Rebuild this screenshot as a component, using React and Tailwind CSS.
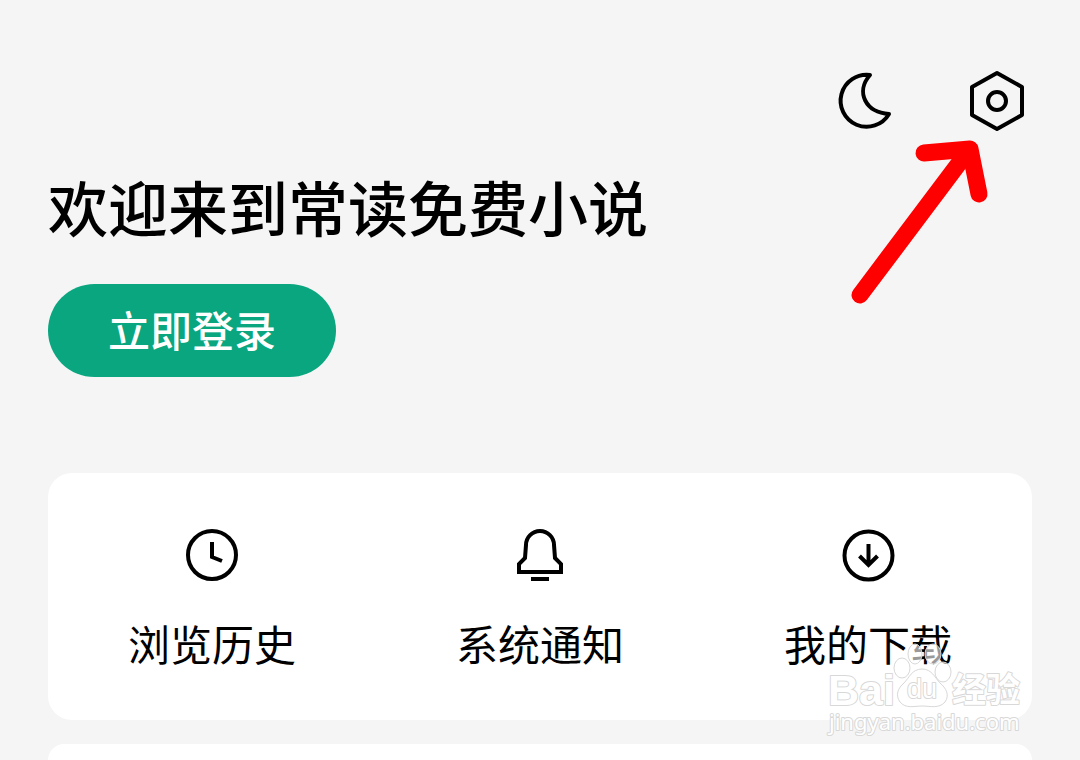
import React from "react";

const cjk = "font-['Noto_Sans_CJK_SC',sans-serif]";

const MoonIcon = () => (
  <svg viewBox="0 0 72 72" className="w-[72px] h-[72px]" fill="none" stroke="currentColor" strokeWidth="4" strokeLinejoin="round">
    <path d="M42 11C27 28 38 49 61 50A26 26 0 1 1 42 11Z" />
  </svg>
);

const SettingsIcon = () => (
  <svg viewBox="0 0 72 72" className="w-[72px] h-[72px]" fill="none" stroke="currentColor" strokeWidth="4" strokeLinejoin="round">
    <path d="M37 9L62 23V51L37 65L12 51V23Z" />
    <circle cx="37" cy="37" r="9" />
  </svg>
);

const ClockIcon = () => (
  <svg viewBox="0 0 68 68" className="w-[68px] h-[68px]" fill="none" stroke="currentColor" strokeWidth="4">
    <circle cx="34" cy="34" r="24" />
    <path d="M34 21V36L44 40" />
  </svg>
);

const BellIcon = () => (
  <svg viewBox="0 0 68 68" className="w-[68px] h-[68px]" fill="none" stroke="currentColor" strokeWidth="4">
    <path d="M13 51V43L19 37L20 24A14 14 0 0 1 48 24L49 37L55 43V51Z" />
    <path d="M25 58H43" />
  </svg>
);

const DownloadIcon = () => (
  <svg viewBox="0 0 68 68" className="w-[68px] h-[68px]" fill="none" stroke="currentColor" strokeWidth="4">
    <circle cx="34.5" cy="34.5" r="24" />
    <path d="M34.5 23V43M25.5 35L34.5 44L43.5 35" />
  </svg>
);

const shortcuts = [
  { label: "浏览历史", Icon: ClockIcon },
  { label: "系统通知", Icon: BellIcon },
  { label: "我的下载", Icon: DownloadIcon },
];

const Arrow = () => (
  <svg
    viewBox="0 0 144 180"
    className="absolute right-[88px] top-[132px] w-[144px] h-[180px] pointer-events-none"
    fill="none"
    stroke="#ff0000"
    strokeWidth="17"
    strokeLinecap="round"
    strokeLinejoin="round"
  >
    <path d="M12 163L121 18" />
    <path d="M76 21L122 17L131 62" />
  </svg>
);

const Watermark = () => (
  <svg
    viewBox="0 0 212 104"
    className="absolute right-0 -bottom-5 z-10 w-[212px] h-[104px] pointer-events-none"
    fill="#ffffff"
    stroke="#d8d8d8"
    strokeLinejoin="round"
  >
    <g fillOpacity="0.6">
      <ellipse cx="82" cy="32" rx="8" ry="10" />
      <ellipse cx="95" cy="18" rx="7" ry="10" />
      <ellipse cx="113" cy="18" rx="8" ry="10" />
      <ellipse cx="123" cy="36" rx="8" ry="10" />
      <path d="M102 33C92 33 89 42 84 47C78 52 75 59 80 66C86 73 94 70 102 70C110 70 119 73 125 66C130 59 126 52 120 47C115 42 112 33 102 33Z" />
    </g>
    {/* outline sits behind the white fill */}
    <g strokeWidth="2" paintOrder="stroke">
      <text x="8" y="69" fontSize="43" fontWeight="700" fontFamily="Liberation Sans">Bai</text>
      <text x="87" y="62" fontSize="27" fontFamily="Liberation Sans">du</text>
      <text x="132" y="66" fontSize="34" fontWeight="700" fontFamily="Noto Sans CJK SC">经验</text>
      <text x="9" y="94" fontSize="22" fontFamily="Noto Sans">jingyan.baidu.com</text>
    </g>
  </svg>
);

const App = () => {
  return (
    <div className={`relative flex flex-col min-h-screen px-12 pt-16 bg-[#f5f5f5] text-black overflow-hidden ${cjk}`}>
      <header className="flex justify-end gap-[60px]">
        <button type="button" aria-label="夜间模式">
          <MoonIcon />
        </button>
        <button type="button" aria-label="设置">
          <SettingsIcon />
        </button>
      </header>

      <h1 className="mt-[34px] text-6xl leading-[72px] font-medium">欢迎来到常读免费小说</h1>
      <button
        type="button"
        className="self-start mt-[42px] h-[93px] px-[60px] pb-1 rounded-full bg-[#0aa67f] text-white text-[42px] leading-[60px] font-medium"
      >
        立即登录
      </button>

      {/* Shortcuts */}
      <section className="relative mt-24 rounded-3xl bg-white">
        <div className="grid grid-cols-3 pt-12 pb-[47px]">
          {shortcuts.map(({ label, Icon }) => (
            <button key={label} type="button" className="flex flex-col items-center gap-6">
              <Icon />
              <span className="text-[42px] leading-[60px]">{label}</span>
            </button>
          ))}
        </div>
        <Watermark />
      </section>

      {/* Next card runs past the bottom edge */}
      <section className="grow mt-6 rounded-t-3xl bg-white" />

      <Arrow />
    </div>
  );
};

export default App;
